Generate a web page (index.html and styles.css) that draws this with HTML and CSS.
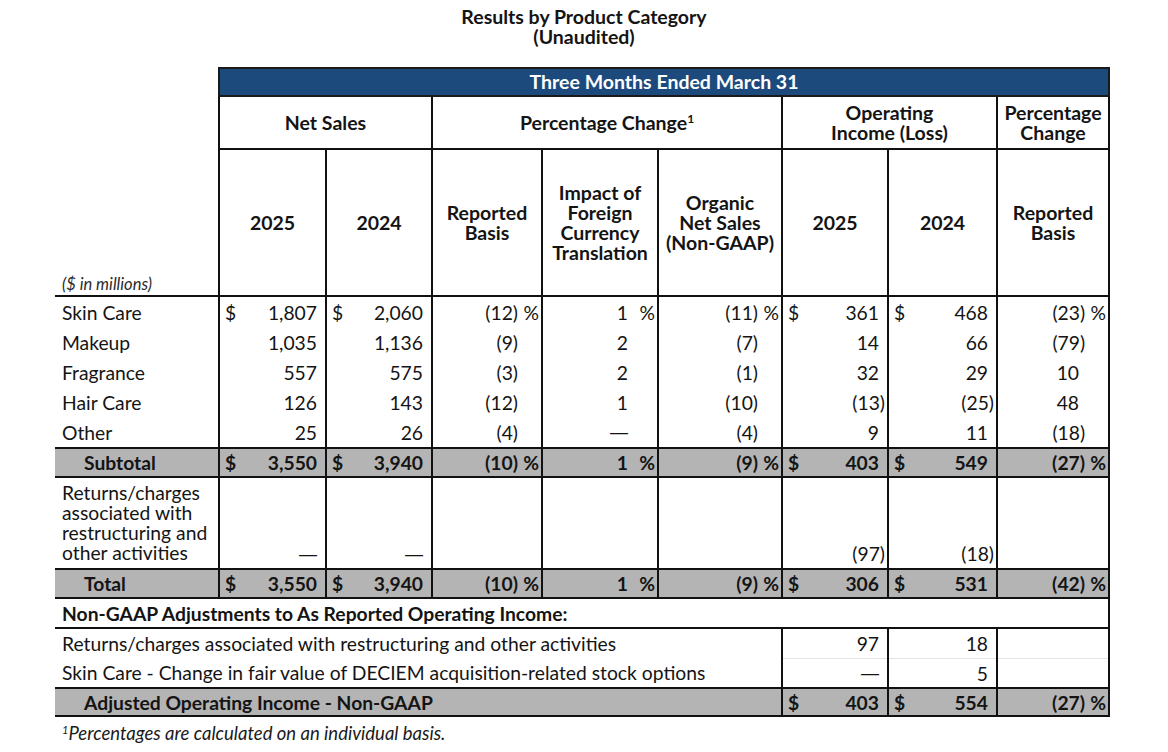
FILE: index.html
```html
<!DOCTYPE html>
<html>
<head>
<meta charset="utf-8">
<link rel="stylesheet" href="styles.css">
</head>
<body>
<div class="page">
  <div class="title">
    <div>Results by Product Category</div>
    <div>(Unaudited)</div>
  </div>
  <table class="fin">
    <colgroup>
      <col class="w-label"><col class="w-ns1"><col class="w-ns2"><col class="w-rb"><col class="w-fx"><col class="w-org"><col class="w-oi1"><col class="w-oi2"><col class="w-pc">
    </colgroup>
    <tr class="r-band">
      <td class="blank"></td>
      <td class="band" colspan="8">Three Months Ended March 31</td>
    </tr>
    <tr class="r-grp">
      <td class="blank"></td>
      <td class="hd" colspan="2">Net Sales</td>
      <td class="hd" colspan="3">Percentage Change<sup>1</sup></td>
      <td class="hd" colspan="2">Operating<br>Income (Loss)</td>
      <td class="hd">Percentage<br>Change</td>
    </tr>
    <tr class="r-sub">
      <td class="units">($ in millions)</td>
      <td class="hd">2025</td>
      <td class="hd">2024</td>
      <td class="hd">Reported<br>Basis</td>
      <td class="hd">Impact of<br>Foreign<br>Currency<br>Translation</td>
      <td class="hd">Organic<br>Net Sales<br>(Non-GAAP)</td>
      <td class="hd">2025</td>
      <td class="hd">2024</td>
      <td class="hd">Reported<br>Basis</td>
    </tr>

    <tr class="r-data">
      <td class="lbl">Skin Care</td>
      <td class="n"><div class="c"><span class="cur">$</span><span class="v">1,807</span></div></td>
      <td class="n"><div class="c"><span class="cur">$</span><span class="v">2,060</span></div></td>
      <td class="n"><div class="c"><span class="v ng">(12)</span><span class="pc">%</span></div></td>
      <td class="n"><div class="c"><span class="v">1</span><span class="pc">%</span></div></td>
      <td class="n"><div class="c"><span class="v ng">(11)</span><span class="pc">%</span></div></td>
      <td class="n"><div class="c"><span class="cur">$</span><span class="v">361</span></div></td>
      <td class="n"><div class="c"><span class="cur">$</span><span class="v">468</span></div></td>
      <td class="n"><div class="c"><span class="v ng">(23)</span><span class="pc">%</span></div></td>
    </tr>
    <tr class="r-data">
      <td class="lbl">Makeup</td>
      <td class="n"><div class="c"><span class="v">1,035</span></div></td>
      <td class="n"><div class="c"><span class="v">1,136</span></div></td>
      <td class="n"><div class="c"><span class="v ng">(9)</span><span class="pc"></span></div></td>
      <td class="n"><div class="c"><span class="v">2</span><span class="pc"></span></div></td>
      <td class="n"><div class="c"><span class="v ng">(7)</span><span class="pc"></span></div></td>
      <td class="n"><div class="c"><span class="v">14</span></div></td>
      <td class="n"><div class="c"><span class="v">66</span></div></td>
      <td class="n"><div class="c"><span class="v ng">(79)</span><span class="pc"></span></div></td>
    </tr>
    <tr class="r-data">
      <td class="lbl">Fragrance</td>
      <td class="n"><div class="c"><span class="v">557</span></div></td>
      <td class="n"><div class="c"><span class="v">575</span></div></td>
      <td class="n"><div class="c"><span class="v ng">(3)</span><span class="pc"></span></div></td>
      <td class="n"><div class="c"><span class="v">2</span><span class="pc"></span></div></td>
      <td class="n"><div class="c"><span class="v ng">(1)</span><span class="pc"></span></div></td>
      <td class="n"><div class="c"><span class="v">32</span></div></td>
      <td class="n"><div class="c"><span class="v">29</span></div></td>
      <td class="n"><div class="c"><span class="v">10</span><span class="pc"></span></div></td>
    </tr>
    <tr class="r-data">
      <td class="lbl">Hair Care</td>
      <td class="n"><div class="c"><span class="v">126</span></div></td>
      <td class="n"><div class="c"><span class="v">143</span></div></td>
      <td class="n"><div class="c"><span class="v ng">(12)</span><span class="pc"></span></div></td>
      <td class="n"><div class="c"><span class="v">1</span><span class="pc"></span></div></td>
      <td class="n"><div class="c"><span class="v ng">(10)</span><span class="pc"></span></div></td>
      <td class="n"><div class="c"><span class="v ng">(13)</span></div></td>
      <td class="n"><div class="c"><span class="v ng">(25)</span></div></td>
      <td class="n"><div class="c"><span class="v">48</span><span class="pc"></span></div></td>
    </tr>
    <tr class="r-data">
      <td class="lbl">Other</td>
      <td class="n"><div class="c"><span class="v">25</span></div></td>
      <td class="n"><div class="c"><span class="v">26</span></div></td>
      <td class="n"><div class="c"><span class="v ng">(4)</span><span class="pc"></span></div></td>
      <td class="n"><div class="c"><span class="v dash">—</span><span class="pc"></span></div></td>
      <td class="n"><div class="c"><span class="v ng">(4)</span><span class="pc"></span></div></td>
      <td class="n"><div class="c"><span class="v">9</span></div></td>
      <td class="n"><div class="c"><span class="v">11</span></div></td>
      <td class="n"><div class="c"><span class="v ng">(18)</span><span class="pc"></span></div></td>
    </tr>
    <tr class="r-data r-tot">
      <td class="lbl ind">Subtotal</td>
      <td class="n"><div class="c"><span class="cur">$</span><span class="v">3,550</span></div></td>
      <td class="n"><div class="c"><span class="cur">$</span><span class="v">3,940</span></div></td>
      <td class="n"><div class="c"><span class="v ng">(10)</span><span class="pc">%</span></div></td>
      <td class="n"><div class="c"><span class="v">1</span><span class="pc">%</span></div></td>
      <td class="n"><div class="c"><span class="v ng">(9)</span><span class="pc">%</span></div></td>
      <td class="n"><div class="c"><span class="cur">$</span><span class="v">403</span></div></td>
      <td class="n"><div class="c"><span class="cur">$</span><span class="v">549</span></div></td>
      <td class="n"><div class="c"><span class="v ng">(27)</span><span class="pc">%</span></div></td>
    </tr>
    <tr class="r-ret">
      <td class="lbl wrap">Returns/charges associated with restructuring and other activities</td>
      <td class="n"><div class="c"><span class="v dash">—</span></div></td>
      <td class="n"><div class="c"><span class="v dash">—</span></div></td>
      <td class="n"></td>
      <td class="n"></td>
      <td class="n"></td>
      <td class="n"><div class="c"><span class="v ng">(97)</span></div></td>
      <td class="n"><div class="c"><span class="v ng">(18)</span></div></td>
      <td class="n"></td>
    </tr>
    <tr class="r-data r-tot">
      <td class="lbl ind">Total</td>
      <td class="n"><div class="c"><span class="cur">$</span><span class="v">3,550</span></div></td>
      <td class="n"><div class="c"><span class="cur">$</span><span class="v">3,940</span></div></td>
      <td class="n"><div class="c"><span class="v ng">(10)</span><span class="pc">%</span></div></td>
      <td class="n"><div class="c"><span class="v">1</span><span class="pc">%</span></div></td>
      <td class="n"><div class="c"><span class="v ng">(9)</span><span class="pc">%</span></div></td>
      <td class="n"><div class="c"><span class="cur">$</span><span class="v">306</span></div></td>
      <td class="n"><div class="c"><span class="cur">$</span><span class="v">531</span></div></td>
      <td class="n"><div class="c"><span class="v ng">(42)</span><span class="pc">%</span></div></td>
    </tr>
    <tr class="r-data r-head">
      <td class="lbl sect" colspan="9">Non-GAAP Adjustments to As Reported Operating Income:</td>
    </tr>
    <tr class="r-data r-adj1">
      <td class="lbl" colspan="6">Returns/charges associated with restructuring and other activities</td>
      <td class="n"><div class="c"><span class="v">97</span></div></td>
      <td class="n"><div class="c"><span class="v">18</span></div></td>
      <td class="n"></td>
    </tr>
    <tr class="r-data r-adj2">
      <td class="lbl" colspan="6">Skin Care - Change in fair value of DECIEM acquisition-related stock options</td>
      <td class="n"><div class="c"><span class="v dash">—</span></div></td>
      <td class="n"><div class="c"><span class="v">5</span></div></td>
      <td class="n"></td>
    </tr>
    <tr class="r-data r-tot r-last">
      <td class="lbl ind" colspan="6">Adjusted Operating Income - Non-GAAP</td>
      <td class="n"><div class="c"><span class="cur">$</span><span class="v">403</span></div></td>
      <td class="n"><div class="c"><span class="cur">$</span><span class="v">554</span></div></td>
      <td class="n"><div class="c"><span class="v ng">(27)</span><span class="pc">%</span></div></td>
    </tr>
  </table>
  <div class="foot"><sup>1</sup>Percentages are calculated on an individual basis.</div>
</div>
</body>
</html>
```
FILE: styles.css
```css
html, body {
  margin: 0;
  padding: 0;
  background: #fff;
}
body {
  font-family: Lato, "Noto Sans", sans-serif;
  color: #141414;
}
.page {
  width: 1168px;
  padding-top: 7px;
}
.title {
  text-align: center;
  font-weight: 700;
  font-size: 19.5px;
  line-height: 20px;
  margin-bottom: 20px;
}
.fin {
  margin-left: 55px;
  width: 1054px;
  border-collapse: collapse;
  table-layout: fixed;
  font-size: 19.3px;
}
.w-label { width: 164px; }
.w-ns1 { width: 107px; }
.w-ns2 { width: 106px; }
.w-rb { width: 110px; }
.w-fx { width: 116px; }
.w-org { width: 124px; }
.w-oi1 { width: 106px; }
.w-oi2 { width: 109px; }
.w-pc { width: 112px; }

.fin td {
  padding: 0;
}
.r-band td { height: 26px; }
.band {
  background: #1d4a7d;
  color: #fff;
  font-weight: 700;
  text-align: center;
  border: 2px solid #1a1a1a;
  line-height: 20px;
  font-size: 19.5px;
}
.hd {
  border: 2px solid #111;
  font-weight: 700;
  text-align: center;
  line-height: 20px;
  font-size: 19.5px;
}
.hd sup {
  font-size: 12px;
  line-height: 0;
  vertical-align: 7px;
}
.r-grp td { height: 51px; }
.r-sub td { height: 145px; }
.units {
  vertical-align: bottom;
  font-style: italic;
  font-size: 16.5px;
  color: #2a2a2a;
  padding: 0 0 1px 7px !important;
  border-bottom: 2px solid #111;
}

.r-data td { height: 30px; }
.lbl {
  padding-left: 7px !important;
  white-space: nowrap;
}
.lbl.ind { padding-left: 29px !important; }
.lbl.wrap {
  white-space: normal;
  line-height: 20px;
  vertical-align: top;
  padding-top: 5px !important;
}
.n {
  border-left: 2px solid #111;
  border-right: 2px solid #111;
  padding: 0 2px 0 5px !important;
}
.c {
  display: flex;
  justify-content: flex-end;
  align-items: baseline;
}
.cur { margin-right: auto; }
.v { padding-right: 6px; }
.v.ng { padding-right: 0; }
.dash { font-family: "Liberation Sans", sans-serif; font-size: 18px; }
.pc {
  display: inline-block;
  width: 21px;
  text-align: right;
}

.r-tot td {
  background: #b4b4b4;
  font-weight: 700;
  border-top: 2px solid #111;
  border-bottom: 2px solid #111;
}
.r-data.r-tot td { height: 27px; }
.r-ret td {
  height: 85px;
  vertical-align: bottom;
  border-bottom: 2px solid #111;
}
.r-ret td.n { padding-bottom: 3px !important; }
.r-data.r-head td {
  height: 28px;
  font-weight: 700;
  border-right: 2px solid #111;
  border-bottom: 2px solid #111;
}
.r-data.r-adj1 td { height: 29px; }
.r-data.r-adj2 td { height: 28px; }
.r-adj1 td.n { border-bottom: 1px solid #e4e4e4; }
.r-data.r-last td { height: 26px; }

.foot {
  margin-top: 5px;
  padding-left: 62px;
  font-style: italic;
  font-size: 18.5px;
  color: #1a1a1a;
}
.foot sup {
  font-size: 11px;
  vertical-align: 6px;
  line-height: 0;
}
```
